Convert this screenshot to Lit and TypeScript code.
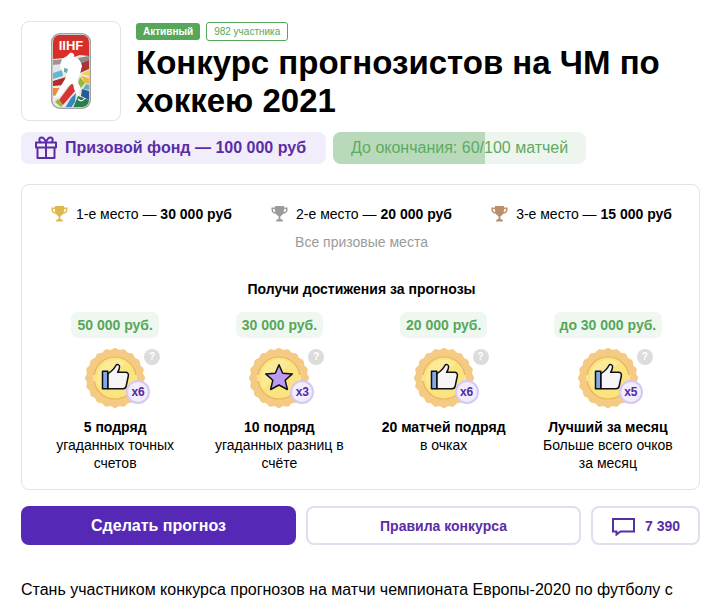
import { LitElement, html, css, svg } from "lit";
import { customElement, property } from "lit/decorators.js";

interface Place {
  label: string;
  prize: string;
  color: string;
}

interface Achievement {
  reward: string;
  icon: "thumb" | "star";
  times: string;
  title: string;
  text: string;
}

const PLACES: Place[] = [
  { label: "1-е место", prize: "30 000 руб", color: "#dfb74f" },
  { label: "2-е место", prize: "20 000 руб", color: "#9b9b9b" },
  { label: "3-е место", prize: "15 000 руб", color: "#bb8d68" },
];

const ACHIEVEMENTS: Achievement[] = [
  { reward: "50 000 руб.", icon: "thumb", times: "x6", title: "5 подряд", text: "угаданных точных счетов" },
  { reward: "30 000 руб.", icon: "star", times: "x3", title: "10 подряд", text: "угаданных разниц в счёте" },
  { reward: "20 000 руб.", icon: "thumb", times: "x6", title: "20 матчей подряд", text: "в очках" },
  { reward: "до 30 000 руб.", icon: "thumb", times: "x5", title: "Лучший за месяц", text: "Больше всего очков за месяц" },
];

/* Outline of a rosette: a circle whose radius swings between two values. */
function rosette(cx: number, cy: number, radius: number, depth: number, waves: number): string {
  const steps = waves * 10;
  const points: string[] = [];
  for (let i = 0; i < steps; i++) {
    const a = (i / steps) * Math.PI * 2;
    const r = radius + depth * Math.cos(a * waves);
    points.push(`${(cx + r * Math.sin(a)).toFixed(2)} ${(cy - r * Math.cos(a)).toFixed(2)}`);
  }
  return `M${points.join("L")}Z`;
}

const ROSETTE = rosette(30, 30, 28.8, 0.8, 20);

const thumb = svg`
  <path d="M17.500 23.300h5.300v17.400h-5.300z" fill="#82a9ea" stroke="#111" stroke-width="1.500" stroke-linejoin="round"/>
  <path d="M23 40.700V25.500C26.500 23.500 29.500 20.500 31 17.300C31.800 15.800 34.800 16.500 34.600 19C34.500 20.700 33.500 22.800 32.600 24.300H40.500C42.800 24.300 43.800 26 43.300 28L41.200 38C40.800 40 40 40.700 38.200 40.700Z" fill="#f6f4f4" stroke="#111" stroke-width="1.500" stroke-linejoin="round"/>`;

const star = svg`
  <path d="M30 16.800L33.700 25.200L43.300 25.900L36.200 32.300L38.400 41.500L30 37L21.600 41.500L23.800 32.300L16.700 25.900L26.300 25.200Z" fill="#bb9bf3" stroke="#111" stroke-width="1.500" stroke-linejoin="round"/>`;

@customElement("contest-logo")
class ContestLogo extends LitElement {
  static styles = css`
    :host {
      display: flex;
      align-items: center;
      justify-content: center;
      box-sizing: border-box;
      flex: none;
      width: 100px;
      height: 100px;
      border: 1px solid #e3e3e3;
      border-radius: 8px;
    }
    .word {
      font: bold 13px "Liberation Sans", Arial, sans-serif;
    }
  `;

  render() {
    return html`
      <svg width="42" height="78" viewBox="0 0 42 78" role="img" aria-label="IIHF">
        <defs>
          <clipPath id="shield"><rect x="3" y="3" width="36" height="72" rx="7" /></clipPath>
        </defs>
        <rect x="1" y="1" width="40" height="76" rx="9" fill="#a3a2a3" />
        <rect x="2.300" y="2.300" width="37.400" height="73.400" rx="8" fill="#dedcda" />
        <g clip-path="url(#shield)">
          <rect x="2" y="2" width="38" height="74" fill="#ece9e6" />
          <path d="M3 3h36v21l-9-1-6 2-10 1-11 1z" fill="#d82e27" />
          <path d="M3 3h36v4H3z" fill="#c9342f" />
          <path d="M3 28l12-1-3 5-9 1z" fill="#9b9594" />
          <path d="M3 34l8-1-3 6-5 1z" fill="#dbe8ec" />
          <path d="M3 41l9-3 1 6-10 3z" fill="#61b8cc" />
          <path d="M3 49l13-4-2 8-11 1z" fill="#b22c2c" />
          <path d="M3 56h8l-5 9-3-2z" fill="#f08a39" />
          <path d="M28 26l11-2v4l-8 4z" fill="#8e8a89" />
          <path d="M30 32l9-4v9l-9 4z" fill="#aa3434" />
          <path d="M31 42l8-4v6z" fill="#efd24d" />
          <path d="M31 44l8 2v6l-4-1z" fill="#f1b63d" />
          <path d="M30 45l5 6-4 5-3-5z" fill="#94b73c" />
          <path d="M36 52l3 1v5l-6-1z" fill="#60afbc" />
          <path d="M32 57l7 2v9l-8-4z" fill="#235b9b" />
          <path d="M21 52l5 1-1 6-12 14-4-5z" fill="#d63531" />
          <path d="M5 70l3-3 5 6-2 2z" fill="#94b73c" />
          <path d="M21 66l5-5-1 9-4 6h-6z" fill="#3984c2" />
          <path d="M28 64l11 4v8H23z" fill="#287e49" />
          <path d="M28 67q4 4 7-1" fill="none" stroke="#fff" stroke-width="1.200" />
          <path d="M20 21c3-1 5 2 4 4 4 1 7 4 8 9l-2 8-3 6 3 7-2 9-4-7-1-6-6 4-7 9-6 2 5-9 6-10 2-6-5-2-2-6 2-6 5-3z" fill="#fff" />
          <path d="M14 36l4 1-1 4-3-1z" fill="#6ca8b0" />
        </g>
        <text class="word" x="21" y="18" text-anchor="middle" fill="#fff">IIHF</text>
      </svg>
    `;
  }
}

@customElement("achievement-card")
class AchievementCard extends LitElement {
  @property({ attribute: false }) item!: Achievement;

  static styles = css`
    :host {
      display: flex;
      flex-direction: column;
      align-items: center;
      text-align: center;
      font-size: 14px;
      line-height: 18px;
      padding: 0 12px;
    }
    .reward {
      padding: 4px 6px;
      border-radius: 7px;
      background: #eff7f1;
      color: #56a759;
      font-weight: bold;
      white-space: nowrap;
    }
    .medal {
      position: relative;
      width: 60px;
      height: 60px;
      margin: 10px 0;
    }
    .face {
      display: block;
    }
    .times {
      position: absolute;
      left: 41px;
      top: 32px;
      box-sizing: border-box;
      width: 24px;
      height: 24px;
      border: 2px solid #d6c7f3;
      border-radius: 50%;
      background: #f1edfb;
      color: #5429a4;
      font-size: 12px;
      font-weight: bold;
      line-height: 21px;
    }
    .help {
      position: absolute;
      left: 59px;
      top: 1px;
      width: 16px;
      height: 16px;
      padding: 0;
      border: 0;
      border-radius: 50%;
      background: #dcdcdc;
      color: #fff;
      font: bold 10px/16px "Liberation Sans", Arial, sans-serif;
    }
    .title {
      font-weight: bold;
    }
    p {
      margin: 0;
    }
  `;

  render() {
    const { reward, icon, times, title, text } = this.item;
    return html`
      <div class="reward">${reward}</div>
      <div class="medal">
        <svg class="face" width="60" height="60" viewBox="0 0 60 60" aria-hidden="true">
          <path d=${ROSETTE} fill="#f5cb83" stroke="#efc179" stroke-width="0.8" />
          <circle cx="30" cy="30" r="21" fill="#fae480" stroke="#e8b35b" stroke-width="1.200" />
          <path d="M13 24a18 18 0 0 1 28-9L15 40a18 18 0 0 1-2-16z" fill="#fcea98" />
          <path d="M9 27v6M51 27v6" stroke="#fbe58b" stroke-width="2" />
          ${icon === "star" ? star : thumb}
        </svg>
        <span class="times">${times}</span>
        <button class="help" type="button" aria-label="Подсказка">?</button>
      </div>
      <p class="title">${title}</p>
      <p>${text}</p>
    `;
  }
}

@customElement("app-root")
class AppRoot extends LitElement {
  @property({ type: Number }) played = 60;
  @property({ type: Number }) total = 100;

  static styles = css`
    :host {
      display: block;
      padding: 21px 20px 0 21px;
      background: #fff;
      color: #000;
      font-family: "Liberation Sans", Arial, sans-serif;
      font-size: 14px;
      line-height: 18px;
    }
    .header {
      display: flex;
      gap: 15px;
    }
    .heading {
      flex: 1;
      min-width: 0;
    }
    .badges {
      display: flex;
      align-items: center;
      gap: 6px;
      padding-top: 1px;
      font-size: 10px;
    }
    .badge {
      padding: 0 7px;
      border-radius: 3px;
      line-height: 17px;
    }
    .badge-active {
      background: #56a759;
      color: #fff;
      font-weight: bold;
    }
    .badge-count {
      border: 1px solid #56a759;
      color: #56a759;
    }
    h1 {
      margin: 3px 0 0;
      font-size: 33px;
      line-height: 38px;
    }
    .pills {
      display: flex;
      flex-wrap: wrap;
      gap: 7px;
      margin-top: 11px;
      font-size: 16px;
      line-height: 32px;
    }
    .fund {
      display: flex;
      align-items: center;
      gap: 8px;
      padding: 0 20px 0 14px;
      border-radius: 8px;
      background: #f1edfa;
      color: #5a2da7;
      font-weight: bold;
    }
    .progress {
      position: relative;
      overflow: hidden;
      padding: 0 18px;
      border-radius: 8px;
      background: #edf5ee;
      color: #5eaa61;
    }
    .bar {
      position: absolute;
      inset: 0 auto 0 0;
      background: #b8dabb;
    }
    .progress-text {
      position: relative;
    }
    .card {
      margin-top: 20px;
      padding: 20px 9px 17px 11px;
      border: 1px solid #e2e2e2;
      border-radius: 8px;
      text-align: center;
    }
    .places {
      display: flex;
      flex-wrap: wrap;
      justify-content: space-between;
      gap: 8px;
      margin: 0;
      padding: 0 18px;
      list-style: none;
    }
    .place {
      display: flex;
      align-items: center;
      gap: 8px;
    }
    .all {
      display: block;
      margin-top: 10px;
      color: #9b9b9b;
      text-decoration: none;
    }
    h2 {
      margin: 29px 0 14px;
      font-size: 14px;
      line-height: 18px;
    }
    .achievements {
      display: grid;
      grid-template-columns: repeat(4, 1fr);
    }
    .actions {
      display: flex;
      gap: 10px;
      margin-top: 16px;
    }
    .action {
      display: flex;
      flex: 1;
      align-items: center;
      justify-content: center;
      gap: 9px;
      box-sizing: border-box;
      height: 39px;
      padding: 0 18px;
      border: 2px solid #e2ddef;
      border-radius: 8px;
      background: #fff;
      color: #5a2da7;
      font: bold 14px "Liberation Sans", Arial, sans-serif;
    }
    .primary {
      border-color: #5529b5;
      background: #5529b5;
      color: #fff;
      font-size: 16px;
    }
    .comments {
      flex: none;
    }
    .intro {
      margin: 34px 0 0;
      font-size: 16px;
      line-height: 22px;
    }
  `;

  render() {
    return html`
      <header class="header">
        <contest-logo></contest-logo>
        <div class="heading">
          <div class="badges">
            <span class="badge badge-active">Активный</span>
            <span class="badge badge-count">982 участника</span>
          </div>
          <h1>Конкурс прогнозистов на ЧМ по хоккею 2021</h1>
        </div>
      </header>

      <div class="pills">
        <div class="fund">
          <svg width="22" height="24" viewBox="0 0 22 24" fill="none" stroke="currentColor" stroke-width="2" stroke-linejoin="round" aria-hidden="true">
            <path d="M1 6.500h20v5H1zM2.500 11.500v10.500h17V11.500M11 6.500V22" />
            <path d="M11 6.500C10 3.500 8.500 1.600 6.500 1.600C3.800 1.600 3.600 5.500 6 6.500M11 6.500C12 3.500 13.500 1.600 15.500 1.600C18.200 1.600 18.400 5.500 16 6.500" />
          </svg>
          <span>Призовой фонд — 100 000 руб</span>
        </div>
        <div class="progress">
          <div class="bar" style="width:${(this.played / this.total) * 100}%"></div>
          <span class="progress-text">До окончания: ${this.played}/${this.total} матчей</span>
        </div>
      </div>

      <section class="card">
        <ul class="places">
          ${PLACES.map(
            (p) => html`
              <li class="place">
                <svg width="17" height="16" viewBox="0 0 17 16" fill=${p.color} aria-hidden="true">
                  <path d="M4 0h9v1.500h3.500V4c0 2.200-1.700 3.500-4.300 3.800C11.500 9 10.400 9.900 9.400 10.300V13c1.700.2 2.600 1 2.600 2.500H5C5 14 5.900 13.200 7.600 13v-2.700C6.600 9.900 5.500 9 4.800 7.800C2.200 7.500.5 6.200.5 4V1.500H4zM4 3H2v1c0 1.100.8 1.900 2.300 2.200C4.100 5.200 4 4.200 4 3zm9 0c0 1.200-.1 2.200-.3 3.200C14.200 5.900 15 5.100 15 4V3z" fill-rule="evenodd" />
                </svg>
                <span>${p.label} — <b>${p.prize}</b></span>
              </li>
            `
          )}
        </ul>
        <a class="all" href="#places">Все призовые места</a>
        <h2>Получи достижения за прогнозы</h2>
        <div class="achievements">
          ${ACHIEVEMENTS.map((a) => html`<achievement-card .item=${a}></achievement-card>`)}
        </div>
      </section>

      <div class="actions">
        <button class="action primary" type="button">Сделать прогноз</button>
        <button class="action" type="button">Правила конкурса</button>
        <button class="action comments" type="button" aria-label="Комментарии: 7 390">
          <svg width="25" height="20" viewBox="0 0 25 20" fill="none" stroke="currentColor" stroke-width="2" aria-hidden="true">
            <path d="M2 3h21v12.500H9.500L5.500 18.500V15.500H2z" />
          </svg>
          <span>7 390</span>
        </button>
      </div>

      <p class="intro">Стань участником конкурса прогнозов на матчи чемпионата Европы-2020 по футболу с</p>
    `;
  }
}
